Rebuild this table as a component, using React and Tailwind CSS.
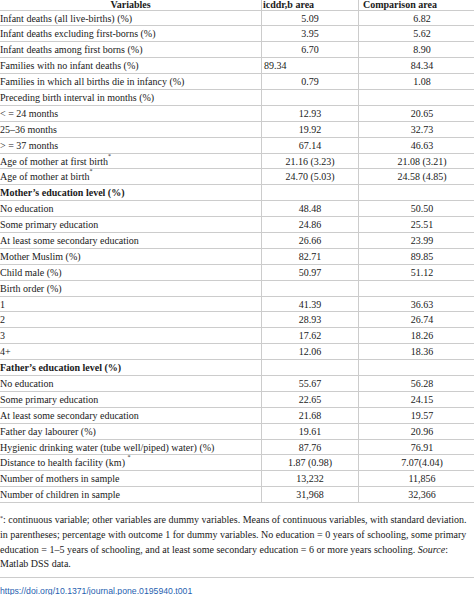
import React from 'react';

const rows = [
  { label: 'Infant deaths (all live-births) (%)', a: '5.09', b: '6.82' },
  { label: 'Infant deaths excluding first-borns (%)', a: '3.95', b: '5.62' },
  { label: 'Infant deaths among first borns (%)', a: '6.70', b: '8.90' },
  { label: 'Families with no infant deaths (%)', a: '89.34', b: '84.34', leftA: true },
  { label: 'Families in which all births die in infancy (%)', a: '0.79', b: '1.08' },
  { label: 'Preceding birth interval in months (%)', a: '', b: '' },
  { label: '< = 24 months', a: '12.93', b: '20.65' },
  { label: '25–36 months', a: '19.92', b: '32.73' },
  { label: '> = 37 months', a: '67.14', b: '46.63' },
  { label: 'Age of mother at first birth', star: true, a: '21.16 (3.23)', b: '21.08 (3.21)' },
  { label: 'Age of mother at birth', star: true, a: '24.70 (5.03)', b: '24.58 (4.85)' },
  { label: 'Mother’s education level (%)', bold: true, a: '', b: '' },
  { label: 'No education', a: '48.48', b: '50.50' },
  { label: 'Some primary education', a: '24.86', b: '25.51' },
  { label: 'At least some secondary education', a: '26.66', b: '23.99' },
  { label: 'Mother Muslim (%)', a: '82.71', b: '89.85' },
  { label: 'Child male (%)', a: '50.97', b: '51.12' },
  { label: 'Birth order (%)', a: '', b: '' },
  { label: '1', a: '41.39', b: '36.63' },
  { label: '2', a: '28.93', b: '26.74' },
  { label: '3', a: '17.62', b: '18.26' },
  { label: '4+', a: '12.06', b: '18.36' },
  { label: 'Father’s education level (%)', bold: true, a: '', b: '' },
  { label: 'No education', a: '55.67', b: '56.28' },
  { label: 'Some primary education', a: '22.65', b: '24.15' },
  { label: 'At least some secondary education', a: '21.68', b: '19.57' },
  { label: 'Father day labourer (%)', a: '19.61', b: '20.96' },
  { label: 'Hygienic drinking water (tube well/piped) water) (%)', a: '87.76', b: '76.91' },
  { label: 'Distance to health facility (km) ', star: true, a: '1.87 (0.98)', b: '7.07(4.04)' },
  { label: 'Number of mothers in sample', a: '13,232', b: '11,856' },
  { label: 'Number of children in sample', a: '31,968', b: '32,366' },
];

const Row = ({ row }) => (
  <div className="flex h-[15.9px] border-b border-[#cccccc] leading-[15px]">
    <div className={`w-[261px] shrink-0 whitespace-nowrap ${row.bold ? 'font-bold' : ''}`}>
      {row.label}
      {row.star && <sup className="text-[6px] align-[4px]">*</sup>}
    </div>
    <div className={`w-[97px] shrink-0 border-l border-[#cccccc] ${row.leftA ? 'pl-[2px] text-left' : 'text-center'}`}>
      {row.a}
    </div>
    <div className="w-[127px] shrink-0 border-l border-[#cccccc] text-center">{row.b}</div>
  </div>
);

export default function App() {
  return (
    <div className="w-[474px] h-[595px] overflow-hidden bg-white text-[#1a1a1a] font-['Liberation_Serif',serif] text-[10px]">
      <div className="w-[485px]">
        <div className="flex h-[10.5px] border-b border-[#cccccc] leading-[10px] font-bold">
          <div className="w-[261px] shrink-0 text-center">Variables</div>
          <div className="w-[97px] shrink-0 border-l border-[#cccccc] pl-[1px]">icddr,b area</div>
          <div className="w-[127px] shrink-0 border-l border-[#cccccc] pl-[4px]">Comparison area</div>
        </div>
        {rows.map((row, i) => (
          <Row key={i} row={row} />
        ))}
      </div>

      <div className="pt-[10px] pb-[5px] border-b border-[#cccccc] w-[485px] leading-[14.7px] text-[10px] whitespace-nowrap">
        <div>
          <sup className="text-[6px]">*</sup>: continuous variable; other variables are dummy variables. Means of continuous variables, with standard deviation.
        </div>
        <div>
          in parentheses; percentage with outcome 1 for dummy variables. No education = 0 years of schooling, some primary
        </div>
        <div>
          education = 1–5 years of schooling, and at least some secondary education = 6 or more years schooling. <i>Source</i>:
        </div>
        <div>Matlab DSS data.</div>
      </div>

      <div className="pt-[5px]">
        <a
          href="#"
          className="text-[#1f5fb0] text-[8.7px] leading-[12px] font-['Liberation_Sans',sans-serif]"
        >
          https://doi.org/10.1371/journal.pone.0195940.t001
        </a>
      </div>
    </div>
  );
}
